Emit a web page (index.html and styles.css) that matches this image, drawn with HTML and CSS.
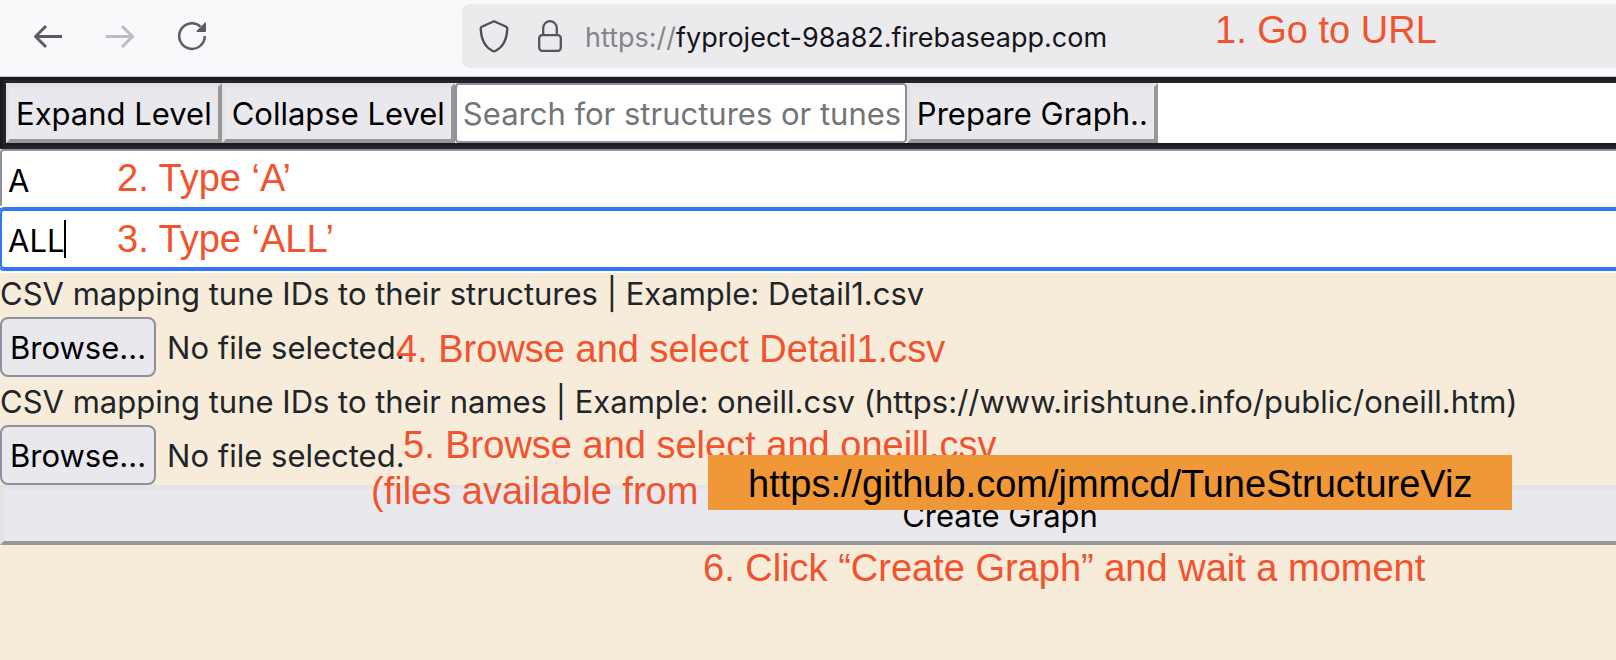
FILE: index.html
```html
<!DOCTYPE html>
<html lang="en">
<head>
<meta charset="utf-8">
<title>Tune Structure Viz</title>
<link rel="stylesheet" href="styles.css">
</head>
<body>
<header class="browser">
  <nav class="nav" aria-label="Browser">
    <button class="icon-button" type="button" aria-label="Back">
      <svg width="30" height="30" viewBox="0 0 30 30"><path d="M28 15.500H2M12 5 1.500 15.500 12 26" fill="none" stroke="#5b5b66" stroke-width="3"/></svg>
    </button>
    <button class="icon-button" type="button" aria-label="Forward">
      <svg width="30" height="30" viewBox="0 0 30 30"><path d="M0 15.500h26M16 5l10.500 10.500L16 26" fill="none" stroke="#bcbcc2" stroke-width="3"/></svg>
    </button>
    <button class="icon-button" type="button" aria-label="Reload">
      <svg width="30" height="30" viewBox="0 0 30 30"><path d="M22.500 5.500A12.800 12.800 0 1 0 26.800 15" fill="none" stroke="#5b5b66" stroke-width="2.500"/><path d="M28 1.500V10q0 1-1 1h-8q-1-.300-.300-1.200L27 1.500z" fill="#5b5b66"/></svg>
    </button>
  </nav>
  <div class="address">
    <svg width="30" height="34" viewBox="0 0 30 34"><path d="M15 2.200 27.200 7.800Q28.400 8.400 28.300 10C27.800 22 23.500 28.500 16.300 32Q15 32.600 13.700 32C6.500 28.500 2.200 22 1.700 10Q1.600 8.400 2.800 7.800Z" fill="none" stroke="#4f4f54" stroke-width="2.300" stroke-linejoin="round"/></svg>
    <svg width="26" height="34" viewBox="0 0 26 34"><path d="M6.200 16V9a6.800 6.800 0 0 1 13.600 0V16" fill="none" stroke="#55555c" stroke-width="2.300"/><rect x="2.200" y="16.200" width="21.600" height="15.600" rx="3" fill="none" stroke="#55555c" stroke-width="2.300"/></svg>
    <span class="url"><span class="scheme">https://</span>fyproject-98a82.firebaseapp.com</span>
  </div>
</header>

<main class="page">
  <div class="toolbar">
    <div class="toolbar-inner">
      <button class="button" type="button">Expand Level</button>
      <button class="button" type="button">Collapse Level</button>
      <input class="field search" type="text" aria-label="Search" placeholder="Search for structures or tunes">
      <button class="button" type="button">Prepare Graph..</button>
    </div>
  </div>
  <form class="form">
    <input class="field" type="text" aria-label="Corpus" value="A">
    <div class="focused">
      <input class="field" type="text" aria-label="Structures" value="ALL">
      <span class="caret"></span>
    </div>
    <p class="hint">CSV mapping tune IDs to their structures | Example: Detail1.csv</p>
    <div class="file">
      <input class="file-input" type="file" id="structures">
      <label class="browse" for="structures">Browse...</label>
      <span>No file selected.</span>
    </div>
    <p class="hint">CSV mapping tune IDs to their names | Example: oneill.csv (https://www.irishtune.info/public/oneill.htm)</p>
    <div class="file">
      <input class="file-input" type="file" id="names">
      <label class="browse" for="names">Browse...</label>
      <span>No file selected.</span>
    </div>
    <button class="button" type="button">Create Graph</button>
  </form>
</main>

<div class="note note-url">1. Go to URL</div>
<div class="note note-a">2. Type ‘A’</div>
<div class="note note-all">3. Type ‘ALL’</div>
<div class="note note-detail">4. Browse and select Detail1.csv</div>
<div class="note note-oneill">5. Browse and select and oneill.csv</div>
<div class="note note-files">(files available from</div>
<a class="note note-link" href="https://github.com/jmmcd/TuneStructureViz">https://github.com/jmmcd/TuneStructureViz</a>
<div class="note note-click">6. Click “Create Graph” and wait a moment</div>
</body>
</html>
```
FILE: styles.css
```css
* {
  box-sizing: border-box;
}

body {
  position: relative;
  min-height: 100vh;
  margin: 0;
  overflow: hidden;
  background: #f7ebda;
  color: #212529;
  font: 31px/48px Inter, "Liberation Sans", sans-serif;
}

.browser {
  display: flex;
  gap: 254px;
  height: 77px;
  padding: 4px 0 8px 34px;
  border-bottom: 1px solid #cccccf;
  background: #f9f9fb;
}

.nav {
  display: flex;
  align-items: center;
  gap: 42px;
}

.icon-button {
  display: flex;
  padding: 0;
  border: 0;
  background: none;
}

.address {
  display: flex;
  flex: 1;
  align-items: center;
  padding-left: 17px;
  border-radius: 8px 0 0 8px;
  background: #ebebed;
}

.address svg {
  flex: none;
  margin-right: 28px;
}

.address svg + svg {
  margin-right: 22px;
}

.url {
  padding-top: 4px;
  color: #15141a;
  font-size: 27px;
}

.scheme {
  color: #858589;
}

.toolbar {
  border: 3px solid #1a1b1e;
  border-right: 0;
  border-bottom-color: #22252b;
}

.toolbar-inner {
  display: flex;
  border: 3px solid #22252b;
  border-right: 0;
  border-bottom-color: #1a1b1e;
  background: #fff;
}

.button,
.field {
  height: 60px;
  margin: 0;
  color: #000;
  font: inherit;
}

.button {
  padding: 2px 6px 0;
  border: 4px solid;
  border-color: #e3e3e3 #979797 #979797 #e3e3e3;
  background: #e9e9ed;
}

.field {
  padding: 2px 4px 0 6px;
  border: 2px solid #8f8f9d;
  border-radius: 4px;
  background: #fff;
  outline: none;
}

.field::placeholder {
  color: #757575;
  opacity: 1;
}

.search {
  width: 452px;
  padding-top: 0;
}

/* The form runs past the right edge of the window. */
.form {
  display: grid;
  width: calc(100% + 384px);
}

.focused {
  display: grid;
  position: relative;
}

.focused .field {
  border-color: #3177f2;
  outline: 2px solid #3177f2;
  box-shadow: 0 0 0 4px #fff;
}

.caret {
  position: absolute;
  top: 11px;
  left: 64px;
  width: 2px;
  height: 38px;
  background: #000;
}

.hint {
  height: 48px;
  margin: 0;
  padding-top: 1px;
}

.file {
  display: flex;
  position: relative;
  align-items: center;
  gap: 11px;
  height: 60px;
}

.file span {
  padding-top: 2px;
}

.file-input {
  position: absolute;
  width: 156px;
  height: 60px;
  margin: 0;
  opacity: 0;
}

.browse {
  height: 60px;
  padding: 5px 8px 3px;
  border: 2px solid #8f8f9d;
  border-radius: 8px;
  background: #e9e9ed;
  color: #000;
}

.note {
  position: absolute;
  color: #f0532d;
  font: 38px/44px "Liberation Sans", Arial, sans-serif;
  white-space: nowrap;
}

.note-url {
  top: 8px;
  left: 1215px;
}

.note-a {
  top: 156px;
  left: 117px;
}

.note-all {
  top: 217px;
  left: 117px;
}

.note-detail {
  top: 327px;
  left: 396px;
}

.note-oneill {
  top: 423px;
  left: 403px;
}

.note-files {
  top: 469px;
  left: 371px;
}

.note-link {
  top: 455px;
  left: 708px;
  padding: 7px 40px 4px;
  background: #f09837;
  color: #000;
  text-decoration: none;
}

.note-click {
  top: 546px;
  left: 703px;
}
```
